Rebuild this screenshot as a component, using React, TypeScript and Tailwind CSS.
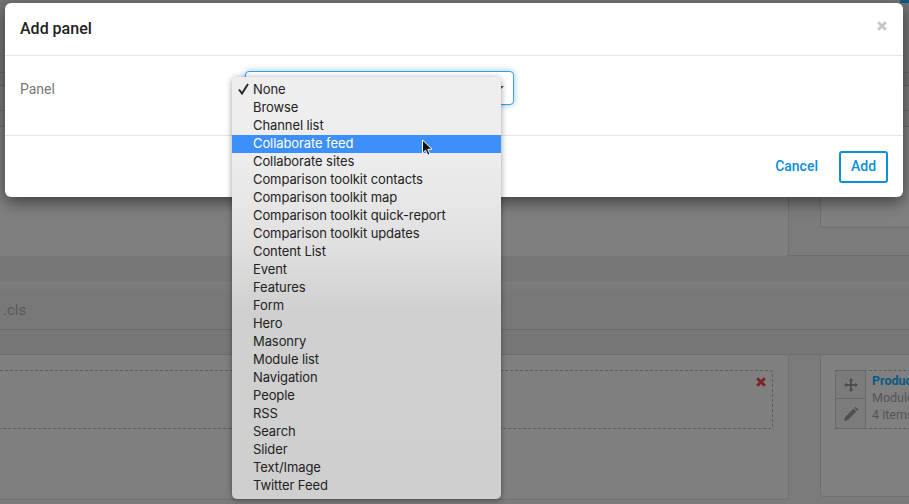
const panels = [
  "None",
  "Browse",
  "Channel list",
  "Collaborate feed",
  "Collaborate sites",
  "Comparison toolkit contacts",
  "Comparison toolkit map",
  "Comparison toolkit quick-report",
  "Comparison toolkit updates",
  "Content List",
  "Event",
  "Features",
  "Form",
  "Hero",
  "Masonry",
  "Module list",
  "Navigation",
  "People",
  "RSS",
  "Search",
  "Slider",
  "Text/Image",
  "Twitter Feed",
];

function TimesIcon({ className }: { className: string }) {
  return (
    <svg className={className} width="10" height="10" viewBox="0 0 10 10">
      <path d="M1.2 1.2 L8.8 8.8 M8.8 1.2 L1.2 8.8" stroke="currentColor" strokeWidth="2.8" fill="none" />
    </svg>
  );
}

function MoveIcon() {
  return (
    <svg width="14" height="14" viewBox="0 0 14 14" fill="#4f4f4f">
      <path d="M7 0 L9.6 2.8 L8 2.8 L8 6 L11.2 6 L11.2 4.4 L14 7 L11.2 9.6 L11.2 8 L8 8 L8 11.2 L9.6 11.2 L7 14 L4.4 11.2 L6 11.2 L6 8 L2.8 8 L2.8 9.6 L0 7 L2.8 4.4 L2.8 6 L6 6 L6 2.8 L4.4 2.8 Z" />
    </svg>
  );
}

function PencilIcon() {
  return (
    <svg width="14" height="14" viewBox="0 0 14 14" fill="#4f4f4f">
      <path d="M0 14 L0.9 10.2 L9.4 1.7 L12.3 4.6 L3.8 13.1 Z M10.2 0.9 L11 0.2 Q11.4 -0.1 11.9 0.2 L13.8 2.1 Q14.1 2.6 13.8 3 L13.1 3.8 Z" />
    </svg>
  );
}

function Background() {
  return (
    <div className="h-[504px] overflow-hidden bg-[#7b7b7b] text-[#555555] [font-family:Roboto,sans-serif]">
      {/* header rows, mostly behind the modal */}
      <div className="relative h-[73px] border-b border-[#666666] bg-[#747474]">
        <div className="absolute top-0 right-0 h-[3px] w-[9px] bg-[#0d5a85]" />
      </div>
      <div className="h-[13px] border-b border-[#666666] bg-[#747474]" />
      <div className="h-[25px] border-b border-[#6a6a6a] bg-[#7a7a7a]" />
      <div className="h-[16px] border-b border-[#6a6a6a]" />
      {/* top cards */}
      <div className="flex h-[129px] gap-[31px] border-b border-[#6e6e6e]">
        <div className="h-[129px] w-[789px] shrink-0 rounded-br-[4px] border-r border-[#707070] bg-[#7f7f7f]" />
        <div className="h-[101px] flex-1 rounded-bl-[4px] border-b border-l border-[#707070] bg-[#808080]" />
      </div>
      <div className="h-[25px] bg-[#777777]" />
      <div className="h-[10px] bg-[#7b7b7b]" />
      <div className="flex h-[39px] items-center border-b border-[#6b6b6b] bg-[#787878] text-[15px] text-[#585858]">
        <span className="pl-[3px]">.cls</span>
      </div>
      <div className="h-[25px] border-b border-[#6e6e6e] bg-[#777777]" />
      {/* bottom cards */}
      <div className="flex gap-[31px]">
        <div className="h-[145px] w-[789px] shrink-0 rounded-br-[4px] border-r border-b border-[#707070] bg-[#7f7f7f] pt-[15px] pr-[15px]">
          <div className="relative h-[59px] rounded-r-[4px] border-y border-r border-dashed border-[#5c5c5c]">
            <TimesIcon className="absolute top-[6px] right-[6px] text-[#7c2226]" />
          </div>
        </div>
        <div className="h-[142px] flex-1 rounded-bl-[4px] border-b border-l border-[#707070] bg-[#808080] pt-[15px] pl-[14px]">
          <div className="flex h-[59px] border-y border-dashed border-[#5c5c5c]">
            <div className="-my-px flex h-[59px] w-[31px] shrink-0 flex-col rounded-l-[3px] border border-[#696969] bg-[#7b7b7b]">
              <div className="flex h-[28px] items-center justify-center border-b border-[#696969]">
                <MoveIcon />
              </div>
              <div className="flex flex-1 items-center justify-center">
                <PencilIcon />
              </div>
            </div>
            <div className="min-w-0 overflow-hidden pt-[1px] pl-[6px] text-[12.5px] leading-[17px] whitespace-nowrap">
              <div className="font-bold text-[#0d5a85]">Product</div>
              <div>Module</div>
              <div>4 items</div>
            </div>
          </div>
        </div>
      </div>
    </div>
  );
}

function Modal() {
  return (
    <div className="absolute top-[3px] left-[5px] h-[194px] w-[898px] rounded-[6px] bg-white shadow-[0_5px_15px_rgba(0,0,0,0.5)] [font-family:Roboto,sans-serif]">
      <div className="flex h-[53px] items-center justify-between border-b border-[#e5e5e5] px-[15px]">
        <h4 className="text-[16px] font-medium text-[#222222]">Add panel</h4>
        <TimesIcon className="mr-[1px] mb-[6px] text-[#c6c6c6]" />
      </div>
      <div className="flex h-[80px] items-start border-b border-[#e5e5e5] px-[15px] pt-[25px]">
        <label className="text-[14px] leading-[17px] text-[#777777]">Panel</label>
      </div>
      <div className="flex h-[61px] items-center justify-end gap-[21px] pr-[15px]">
        <button className="text-[14px] font-medium text-[#0b8fd8]">Cancel</button>
        <button className="h-[32px] w-[49px] rounded-[3px] border-2 border-[#0b8fd8] text-[14px] font-medium text-[#0b8fd8]">
          Add
        </button>
      </div>
    </div>
  );
}

function SelectMenu() {
  return (
    <>
      <div className="absolute top-[71px] left-[245px] h-[34px] w-[269px] rounded-[4px] border border-[#3a9fdc] bg-white shadow-[0_0_6px_rgba(102,175,233,0.7)]">
        <span className="absolute top-[14px] right-[9px] h-0 w-0 border-x-[3px] border-t-[3px] border-x-transparent border-t-[#555555]" />
      </div>
      <ul className="absolute top-[77px] left-[232px] w-[269px] rounded-[5px] bg-[linear-gradient(to_bottom,#eeeeee_0%,#eeeeee_17%,#e0e0e0_40%,#d0d0d0_55%,#cfcfcf_100%)] py-[4px] text-[13px] leading-[16px] tracking-[-0.09px] text-[#222222] shadow-[0_1px_6px_rgba(0,0,0,0.4)] [font-family:Inter,sans-serif]">
        {panels.map((name) => (
          <li
            key={name}
            className={`relative h-[18px] pl-[21px] whitespace-nowrap ${
              name === "Collaborate feed" ? "bg-[#3d8ffb] text-white" : ""
            }`}
          >
            {name === "None" && (
              <svg className="absolute top-[2px] left-[6px]" width="11" height="12" viewBox="0 0 11 12">
                <path d="M1 6.5 L4 10.5 L10 1" fill="none" stroke="#2b2b2b" strokeWidth="2" />
              </svg>
            )}
            {name}
          </li>
        ))}
      </ul>
      {/* mouse cursor */}
      <svg className="absolute top-[139px] left-[421px]" width="13" height="18" viewBox="0 0 13 18">
        <path d="M1.5 1 L1.5 14 L4.6 11.2 L6.8 16.2 L9 15.2 L6.8 10.4 L11 10.2 Z" fill="#111111" stroke="#ffffff" strokeWidth="1" />
      </svg>
    </>
  );
}

export default function App() {
  return (
    <div className="relative h-[504px] w-[909px] overflow-hidden">
      <Background />
      <Modal />
      <SelectMenu />
    </div>
  );
}
